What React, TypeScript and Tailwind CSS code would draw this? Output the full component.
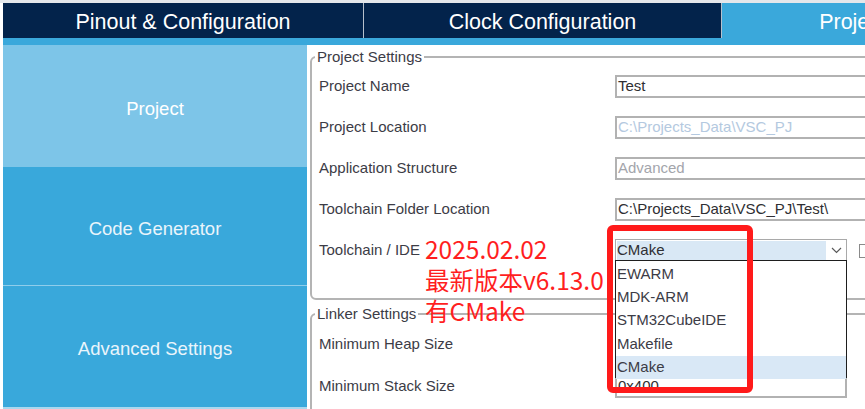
const tabs = [
  { label: "Pinout & Configuration", width: "w-[360px]", active: false },
  { label: "Clock Configuration", width: "w-[357px]", active: false },
  { label: "Project Manager", width: "w-[352px]", active: true },
];

const sideItems = [
  { label: "Project", height: "h-[122px]", bg: "bg-[#7dc5e8]", text: "text-white" },
  { label: "Code Generator", height: "h-[119px]", bg: "bg-[#39a8db]", text: "text-[#eaf5fb]" },
  { label: "Advanced Settings", height: "flex-1", bg: "bg-[#39a8db]", text: "text-[#eaf5fb]" },
];

const projectFields = [
  { label: "Project Name", value: "Test", tone: "text-[#2f2f33]" },
  { label: "Project Location", value: "C:\\Projects_Data\\VSC_PJ", tone: "text-[#b4c9e0]" },
  { label: "Application Structure", value: "Advanced", tone: "text-[#a3a5ab]" },
  { label: "Toolchain Folder Location", value: "C:\\Projects_Data\\VSC_PJ\\Test\\", tone: "text-[#2f2f33]" },
];

const toolchains = ["EWARM", "MDK-ARM", "STM32CubeIDE", "Makefile", "CMake"];

function Field({ value, tone, width = "w-[300px]" }: { value: string; tone: string; width?: string }) {
  return (
    <div className={`${width} h-[23px] border-2 border-[#b2b2b2] pl-[1px] flex items-center text-[15px] ${tone}`}>
      {value}
    </div>
  );
}

export default function App() {
  return (
    <div className="w-[865px] h-[409px] overflow-hidden bg-white relative flex flex-col pl-[3px] border-t-[3px] border-[#e4e7eb] font-['Liberation_Sans',Arial,sans-serif]">
      {/* top tabs */}
      <div className="flex h-[35px] shrink-0">
        {tabs.map((t, i) => (
          <div key={t.label} className="flex shrink-0">
            <div
              className={`${t.width} shrink-0 flex items-center justify-center pt-[3px] text-[21.5px] text-white ${
                t.active ? "bg-[#3aa8db]" : "bg-[#03234b]"
              }`}
            >
              {t.label}
            </div>
            {i < 2 && <div className="w-[1px] bg-[#b6c0cc]" />}
          </div>
        ))}
      </div>
      <div className="h-[7px] bg-[#3aa8db] shrink-0" />

      <div className="flex flex-1 min-h-0">
        {/* sidebar */}
        <div className="w-[304px] shrink-0 flex flex-col">
          {sideItems.map((s, i) => (
            <div
              key={s.label}
              className={`${s.height} ${s.bg} ${s.text} flex items-center justify-center pt-[5px] text-[18.5px] ${
                i === 1 ? "border-b border-[#8fcdeb]" : ""
              }`}
            >
              {s.label}
            </div>
          ))}
          <div className="h-[2px] bg-[#a9d8ef]" />
        </div>

        {/* main */}
        <div className="flex-1 overflow-hidden pl-[3px] pt-[3px] text-[15px] text-[#3c3c46]">
          <fieldset className="w-[620px] border-2 border-[#b4b4b4] rounded-[6px] pb-[27px]">
            <legend className="ml-[3px] px-[2px] leading-[18px] text-[15px]">Project Settings</legend>
            {projectFields.map((f) => (
              <div key={f.label} className="flex items-center h-[41px]">
                <div className="w-[303px] pl-[7px]">{f.label}</div>
                <Field value={f.value} tone={f.tone} />
              </div>
            ))}
            <div className="flex items-center h-[41px]">
              <div className="w-[303px] pl-[7px]">Toolchain / IDE</div>
              <div className="w-[232px] h-[23px] border border-[#a9a9a9] flex">
                <div className="flex-1 bg-[#d9e8f5] ml-[1px] my-[1px] flex items-center text-[#2f2f33]">CMake</div>
                <div className="w-[20px] flex items-center justify-center">
                  <svg width="11" height="7" viewBox="0 0 11 7" fill="none">
                    <path d="M1 1l4.5 4.5L10 1" stroke="#5a5a5a" strokeWidth="1.2" />
                  </svg>
                </div>
              </div>
              <div className="ml-[12px] w-[14px] h-[14px] border border-[#8a8a8a] bg-white shrink-0" />
            </div>
          </fieldset>

          <fieldset className="w-[620px] mt-[5px] border-2 border-[#b4b4b4] rounded-[6px] h-[120px]">
            <legend className="ml-[3px] px-[2px] leading-[18px] text-[15px]">Linker Settings</legend>
            <div className="flex items-center h-[42px]">
              <div className="w-[303px] pl-[7px]">Minimum Heap Size</div>
              <Field value="0x200" tone="text-[#2f2f33]" width="w-[232px]" />
            </div>
            <div className="flex items-center h-[42px]">
              <div className="w-[303px] pl-[7px]">Minimum Stack Size</div>
              <Field value="0x400" tone="text-[#2f2f33]" width="w-[232px]" />
            </div>
          </fieldset>
        </div>
      </div>

      {/* open toolchain list */}
      <div className="absolute left-[615px] top-[257px] w-[232px] h-[118px] pt-[1.5px] bg-white border border-[#1e1e1e] text-[15px] text-[#3c3c46]">
        {toolchains.map((t) => (
          <div
            key={t}
            className={`h-[23.3px] pl-[1px] flex items-center ${t === "CMake" ? "bg-[#d9e8f6]" : ""}`}
          >
            {t}
          </div>
        ))}
      </div>

      {/* red annotation */}
      <div className="absolute left-[607px] top-[222px] w-[146px] h-[168px] border-[6px] border-[#ff1a1a] rounded-[6px]" />
      <div className="absolute left-[425px] top-[230px] text-[24.5px] leading-[31px] text-[#ff1f1f] font-['Noto_Sans_CJK_SC','Noto_Sans',sans-serif]">
        <div>2025.02.02</div>
        <div>最新版本v6.13.0</div>
        <div>有CMake</div>
      </div>
    </div>
  );
}
